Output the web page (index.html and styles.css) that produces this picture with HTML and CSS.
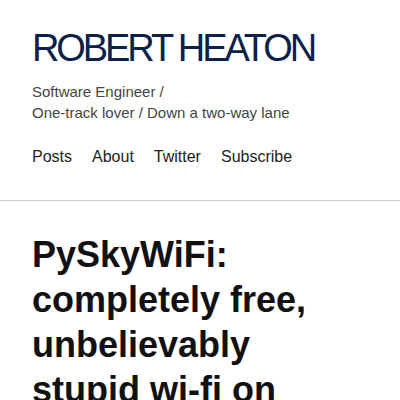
FILE: index.html
```html
<!DOCTYPE html>
<html>
<head>
<meta charset="utf-8">
<link rel="stylesheet" href="styles.css">
</head>
<body>
<header class="site-header">
  <h1 class="site-title">ROBERT HEATON</h1>
  <p class="tagline">Software Engineer /<br>One-track lover / Down a two-way lane</p>
  <nav class="nav">
    <a href="#">Posts</a>
    <a href="#">About</a>
    <a href="#">Twitter</a>
    <a href="#">Subscribe</a>
  </nav>
</header>
<main class="post">
  <h2 class="post-title">PySkyWiFi: completely free, unbelievably stupid wi-fi on long-haul flights</h2>
</main>
</body>
</html>
```
FILE: styles.css
```css
html, body {
  margin: 0;
  padding: 0;
  background: #fff;
  font-family: "Liberation Sans", Arial, sans-serif;
}
.site-header {
  padding: 24px 32px 31px;
  border-bottom: 1px solid #cccccc;
}
.site-title {
  margin: 0;
  font-size: 38px;
  line-height: 49px;
  font-weight: normal;
  letter-spacing: -3.1px;
  color: #0b2149;
}
.tagline {
  margin: 8px 0 0;
  font-size: 15px;
  line-height: 21px;
  color: #444;
}
.nav {
  display: flex;
  gap: 20px;
  margin-top: 22px;
}
.nav a {
  font-size: 16px;
  line-height: 24px;
  color: #222;
  text-decoration: none;
}
.post {
  padding: 31px 32px 0;
}
.post-title {
  margin: 0;
  font-size: 36px;
  line-height: 45px;
  font-weight: bold;
  color: #111;
}
```
